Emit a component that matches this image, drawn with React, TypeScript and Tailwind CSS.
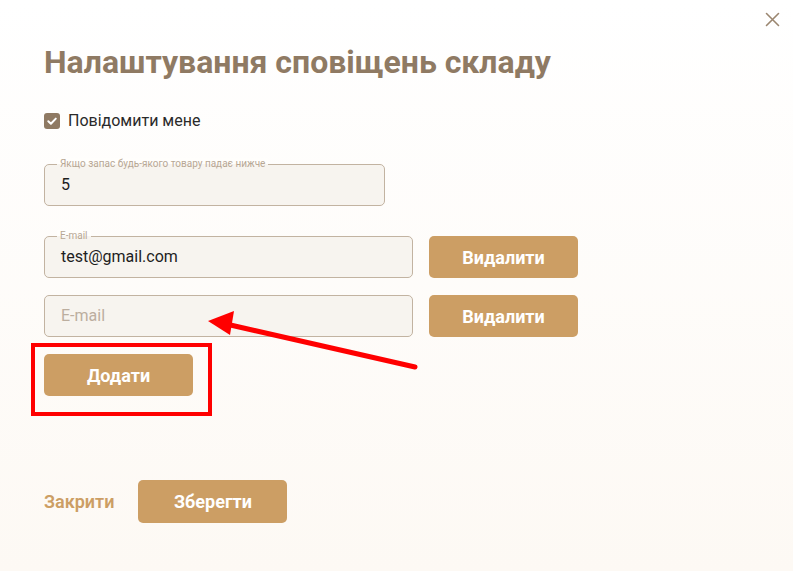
import React from "react";

function OutlinedField({
  label,
  value,
  placeholder,
  width,
}: {
  label?: string;
  value?: string;
  placeholder?: string;
  width: string;
}) {
  return (
    <div className={`relative h-[42px] ${width} rounded-[5px] border border-[#c2b3a1] bg-[#f7f4ef]`}>
      {label && (
        <span className="absolute left-[12px] top-[-7px] px-[3px] text-[10px] leading-[12px] text-[#b7a794] bg-[linear-gradient(to_bottom,#fffefc_50%,#f7f4ef_50%)]">
          {label}
        </span>
      )}
      <div className="flex h-full items-center px-[16px] text-[16px]">
        {value ? (
          <span className="text-[#1e1e1e]">{value}</span>
        ) : (
          <span className="text-[#bcae9f]">{placeholder}</span>
        )}
      </div>
    </div>
  );
}

function Btn({ children }: { children: React.ReactNode }) {
  return (
    <button className="flex h-[42px] w-[149px] items-center justify-center rounded-[5px] bg-[#cc9e64] text-[18px] font-bold text-white">
      {children}
    </button>
  );
}

export default function App() {
  return (
    <div
      className="relative min-h-[571px] w-full bg-[linear-gradient(to_bottom,#ffffff_0%,#fdf9f4_100%)] text-[#1e1e1e]"
      style={{ fontFamily: "Roboto, 'Noto Sans', sans-serif" }}
    >
      <button className="absolute right-[13px] top-[12px] text-[#9b8670]">
        <svg width="15" height="15" viewBox="0 0 15 15" fill="none">
          <path d="M1.5 1.5 L13.5 13.5 M13.5 1.5 L1.5 13.5" stroke="#9b8670" strokeWidth="1.6" strokeLinecap="round" />
        </svg>
      </button>

      <div className="flex flex-col pl-[44px] pt-[38px]">
        <h1 className="text-[32px] font-bold leading-[48px] text-[#8f7a63]">Налаштування сповіщень складу</h1>

        <label className="mt-[25px] flex items-center gap-[8px]">
          <span className="flex h-[16px] w-[16px] items-center justify-center rounded-[3px] bg-[#8f7a63]">
            <svg width="12" height="12" viewBox="0 0 12 12" fill="none">
              <path d="M2.3 6.2 L4.9 8.7 L9.8 3.6" stroke="white" strokeWidth="2" strokeLinecap="round" strokeLinejoin="round" />
            </svg>
          </span>
          <span className="text-[16px] leading-[20px] text-[#2a2a2a]">Повідомити мене</span>
        </label>

        <div className="mt-[33px]">
          <OutlinedField label="Якщо запас будь-якого товару падає нижче" value="5" width="w-[341px]" />
        </div>

        <div className="mt-[30px] flex gap-[16px]">
          <OutlinedField label="E-mail" value="test@gmail.com" width="w-[369px]" />
          <Btn>Видалити</Btn>
        </div>

        <div className="mt-[17px] flex gap-[16px]">
          <OutlinedField placeholder="E-mail" width="w-[369px]" />
          <Btn>Видалити</Btn>
        </div>

        <div className="mt-[17px]">
          <Btn>Додати</Btn>
        </div>

        <div className="mt-[84px] flex items-center gap-[24px]">
          <span className="text-[18px] font-semibold text-[#cc9e64]">Закрити</span>
          <button className="flex h-[43px] w-[149px] items-center justify-center rounded-[5px] bg-[#cc9e64] text-[18px] font-bold text-white">
            Зберегти
          </button>
        </div>
      </div>

      {/* annotation overlay: red box */}
      <div className="pointer-events-none absolute left-[31px] top-[343px] h-[73px] w-[181px] border-[4px] border-[#ff0000]" />
      {/* annotation overlay: arrow */}
      <svg className="pointer-events-none absolute left-0 top-0" width="793" height="571">
        <line x1="415" y1="367" x2="226" y2="324" stroke="#ff0000" strokeWidth="5" strokeLinecap="round" />
        <polygon points="208,321 234,311 230,335" fill="#ff0000" />
      </svg>
    </div>
  );
}
